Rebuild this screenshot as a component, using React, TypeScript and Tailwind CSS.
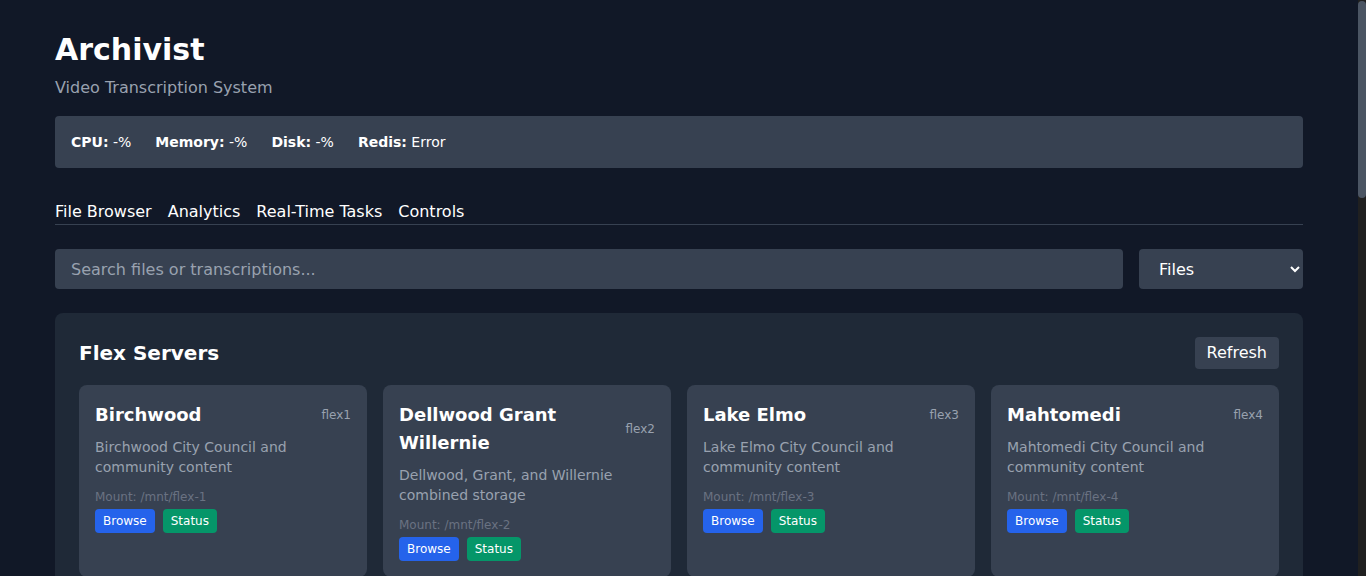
import React from "react";

const servers = [
  { name: "Birchwood", id: "flex1", desc: "Birchwood City Council and community content", mount: "/mnt/flex-1" },
  { name: "Dellwood Grant Willernie", id: "flex2", desc: "Dellwood, Grant, and Willernie combined storage", mount: "/mnt/flex-2" },
  { name: "Lake Elmo", id: "flex3", desc: "Lake Elmo City Council and community content", mount: "/mnt/flex-3" },
  { name: "Mahtomedi", id: "flex4", desc: "Mahtomedi City Council and community content", mount: "/mnt/flex-4" },
  { name: "White Bear Lake", id: "flex5", desc: "White Bear Lake City Council and community content", mount: "/mnt/flex-5" },
  { name: "White Bear Township", id: "flex6", desc: "White Bear Township Council and community content", mount: "/mnt/flex-6" },
  { name: "Oakdale", id: "flex7", desc: "Oakdale City Council and community content", mount: "/mnt/flex-7" },
  { name: "Spare", id: "flex8", desc: "Spare storage and overflow content", mount: "/mnt/flex-8" },
];

function ServerCard({ s }: { s: (typeof servers)[number] }) {
  return (
    <div className="bg-[#374151] rounded-lg p-4">
      <div className="flex items-center justify-between gap-2 mb-2">
        <h3 className="text-lg leading-7 font-bold text-white">{s.name}</h3>
        <span className="text-xs text-gray-400 shrink-0">{s.id}</span>
      </div>
      <p className="text-sm text-gray-400">{s.desc}</p>
      <div className="mt-3 text-xs text-gray-500">Mount: {s.mount}</div>
      <div className="mt-1 flex gap-2">
        <button className="bg-[#2563eb] text-white text-xs px-2 py-1 rounded">Browse</button>
        <button className="bg-[#059669] text-white text-xs px-2 py-1 rounded">Status</button>
      </div>
    </div>
  );
}

export default function App() {
  return (
    <div
      className="min-h-screen bg-[#111827] text-white pr-2"
      style={{ fontFamily: '"DejaVu Sans", "Liberation Sans", sans-serif' }}
    >
      {/* scrollbar overlay */}
      <div className="fixed top-0 right-0 w-2 h-screen bg-[#202020] z-10">
        <div className="h-[197px] mt-px bg-[#4b5563] rounded" />
      </div>

      <div className="max-w-7xl mx-auto px-4 py-8">
        <h1 className="text-3xl font-bold">Archivist</h1>
        <p className="mt-2 text-gray-400">Video Transcription System</p>

        <div className="mt-4 bg-[#374151] rounded p-4 flex gap-6 text-sm">
          <span><b className="font-bold">CPU:</b> -%</span>
          <span><b className="font-bold">Memory:</b> -%</span>
          <span><b className="font-bold">Disk:</b> -%</span>
          <span><b className="font-bold">Redis:</b> Error</span>
        </div>

        <nav className="mt-8 flex gap-4 border-b border-[#374151]">
          <button>File Browser</button>
          <button>Analytics</button>
          <button>Real-Time Tasks</button>
          <button>Controls</button>
        </nav>

        <div className="mt-6 flex gap-4">
          <input
            className="flex-1 h-10 bg-[#374151] rounded px-4 text-white placeholder:text-gray-400 outline-none"
            placeholder="Search files or transcriptions..."
          />
          <select className="w-[164px] h-10 bg-[#374151] rounded px-4 text-white outline-none">
            <option>Files</option>
            <option>Transcriptions</option>
          </select>
        </div>

        <div className="mt-6 bg-[#1f2937] rounded-lg p-6">
          <div className="flex items-center justify-between mb-4">
            <h2 className="text-xl font-semibold">Flex Servers</h2>
            <button className="bg-[#374151] rounded px-3 py-1">Refresh</button>
          </div>
          <div className="grid grid-cols-4 gap-4">
            {servers.map((s) => (
              <ServerCard key={s.id} s={s} />
            ))}
          </div>
        </div>

        <div className="mt-6 bg-[#1f2937] rounded-lg p-6 min-h-[800px]">
          <div className="flex items-center justify-between mb-4">
            <h2 className="text-xl font-semibold">Files</h2>
          </div>
          <p className="text-gray-400 text-sm">Select a flex server to browse files.</p>
        </div>
      </div>
    </div>
  );
}
